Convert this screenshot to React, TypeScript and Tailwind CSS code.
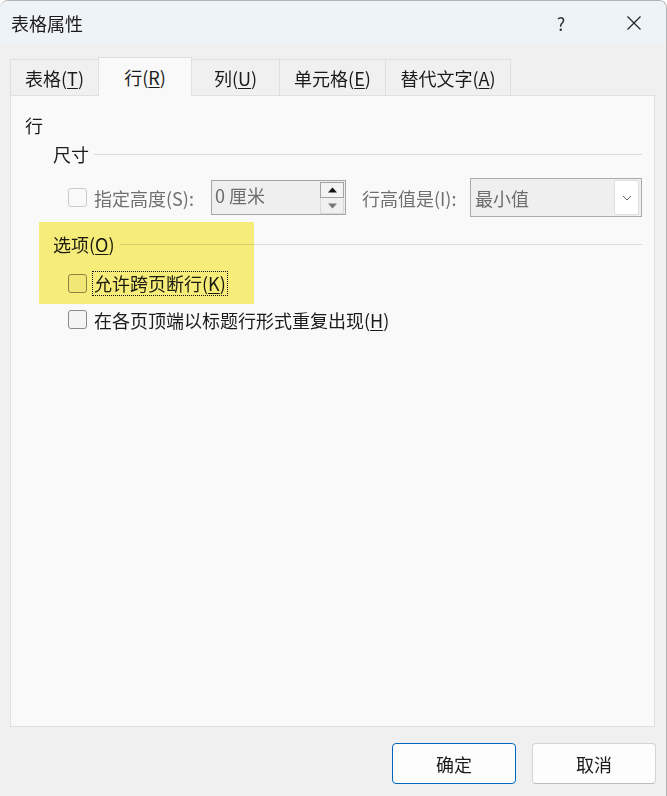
import React from "react";

const font = { fontFamily: '"Noto Sans CJK SC", "Noto Sans", sans-serif' };

function Check({ disabled = false }: { disabled?: boolean }) {
  return (
    <div
      className={
        "w-[19px] h-[19px] shrink-0 rounded-[3px] border " +
        (disabled ? "border-[#cbcbcb] bg-[#f9f9f9]" : "border-[#8a8a8a] bg-[#f4f4f4]")
      }
    />
  );
}

function Tab({ w, selected = false, children }: { w: string; selected?: boolean; children: React.ReactNode }) {
  return (
    <div
      className={
        w +
        " flex items-center justify-center border border-b-0 -ml-px first:ml-0 " +
        (selected
          ? "h-[39px] bg-[#f9f9f9] border-[#e0e0e0] relative z-10 -mb-px"
          : "h-[36px] bg-[#f0f0f0] border-[#dedede]")
      }
    >
      <span className="text-[18px] leading-[24px] text-[#1b1b1b]">{children}</span>
    </div>
  );
}

export default function App() {
  return (
    <div style={font} className="w-[667px] h-[796px] bg-[#f0f0f0] overflow-hidden rounded-t-[8px] border-t border-r border-[#b4b4b4] text-[#1b1b1b]">
      {/* Title bar */}
      <div className="h-[43px] bg-[#eef3f8] flex items-center">
        <div className="pl-[11px] text-[18px] leading-[24px] flex-1">表格属性</div>
        <div className="w-[30px] text-center text-[18px] leading-[24px] text-[#333] mr-[38px]">?</div>
        <div className="w-[40px] flex items-center justify-center mr-[12px]">
          <svg width="16" height="16" viewBox="0 0 16 16">
            <path d="M1.5 1.5 L14.5 14.5 M14.5 1.5 L1.5 14.5" stroke="#222" strokeWidth="1.2" fill="none" />
          </svg>
        </div>
      </div>

      <div className="pl-[10px] pt-[13px]">
        {/* Tabs */}
        <div className="flex items-end h-[38px]">
          <Tab w="w-[89px]">
            表格(<u className="underline-offset-2">T</u>)
          </Tab>
          <Tab w="w-[94px]" selected>
            行(<u className="underline-offset-2">R</u>)
          </Tab>
          <Tab w="w-[89px]">
            列(<u className="underline-offset-2">U</u>)
          </Tab>
          <Tab w="w-[107px]">
            单元格(<u className="underline-offset-2">E</u>)
          </Tab>
          <Tab w="w-[126px]">
            替代文字(<u className="underline-offset-2">A</u>)
          </Tab>
        </div>

        {/* Panel */}
        <div className="relative w-[645px] h-[632px] bg-[#f9f9f9] border border-[#e0e0e0] pt-[17px] pl-[14px] pr-[12px]">
          <div className="h-[24px] text-[18px] leading-[24px]">行</div>

          <div className="mt-[5px] h-[24px] flex items-center pl-[28px]">
            <span className="text-[18px] leading-[24px]">尺寸</span>
            <div className="flex-1 ml-[5px] border-t border-[#dcdcdc]" />
          </div>

          <div className="mt-[12px] h-[39px] flex items-center pl-[43px]">
            <Check disabled />
            <span className="ml-[7px] w-[117px] text-[18px] leading-[24px] text-[#707070]">指定高度(S):</span>
            <div className="w-[135px] h-[35px] border border-[#a6a6a6] bg-[#efefef] flex">
              <span className="flex-1 pl-[3px] pt-[2px] text-[18px] leading-[24px] text-[#6d6d6d]">0 厘米</span>
              <div className="flex flex-col pt-[1px] pr-[1px]">
                <div className="w-[24px] h-[16px] border border-[#a3a3a3] bg-[#f3f3f3] flex items-center justify-center">
                  <svg width="9" height="6" viewBox="0 0 9 6">
                    <path d="M0 5.5 L4.5 0.5 L9 5.5 Z" fill="#111" />
                  </svg>
                </div>
                <div className="w-[24px] h-[16px] border border-t-0 border-[#d8d8d8] bg-[#f0f0f0] flex items-center justify-center">
                  <svg width="9" height="6" viewBox="0 0 9 6">
                    <path d="M0 0.5 L4.5 5.5 L9 0.5 Z" fill="#777" />
                  </svg>
                </div>
              </div>
            </div>
            <span className="ml-[16px] w-[108px] text-[18px] leading-[24px] text-[#707070]">行高值是(I):</span>
            <div className="w-[172px] h-[39px] border border-[#ababab] bg-[#efefef] flex items-center">
              <span className="flex-1 pl-[4px] text-[18px] leading-[24px] text-[#6d6d6d]">最小值</span>
              <div className="w-[25px] h-[35px] mr-[2px] bg-white border border-[#dedede] rounded-[2px] flex items-center justify-center">
                <svg width="10" height="6" viewBox="0 0 10 6">
                  <path d="M1 1 L5 5 L9 1" stroke="#666" strokeWidth="1" fill="none" />
                </svg>
              </div>
            </div>
          </div>

          <div className="mt-[15px] h-[24px] flex items-center pl-[28px]">
            <span className="text-[18px] leading-[24px]">
              选项(<u className="underline-offset-2">O</u>)
            </span>
            <div className="flex-1 ml-[5px] border-t border-[#dcdcdc]" />
          </div>

          <div className="mt-[15px] h-[25px] flex items-center pl-[43px]">
            <Check />
            <span className="ml-[5px] px-[1px] h-[25px] border border-dotted border-[#111] text-[18px] leading-[23px]">
              允许跨页断行(<u className="underline-offset-2">K</u>)
            </span>
          </div>

          <div className="mt-[11px] h-[25px] flex items-center pl-[43px]">
            <Check />
            <span className="ml-[7px] text-[18px] leading-[24px]">
              在各页顶端以标题行形式重复出现(<u className="underline-offset-2">H</u>)
            </span>
          </div>

          {/* Highlighter mark */}
          <div className="absolute left-[28px] top-[126px] w-[215px] h-[82px] bg-[#fbf27c] mix-blend-multiply pointer-events-none" />
        </div>

        {/* Buttons */}
        <div className="mt-[16px] flex justify-end gap-[16px] pr-[10px]">
          <div className="w-[124px] h-[41px] rounded-[4px] border border-[#0067c0] bg-[#fdfdfd] flex items-center justify-center text-[18px] leading-[24px]">
            确定
          </div>
          <div className="w-[124px] h-[41px] rounded-[4px] border border-[#d3d3d3] border-b-[#bdbdbd] bg-[#fdfdfd] flex items-center justify-center text-[18px] leading-[24px]">
            取消
          </div>
        </div>
      </div>
    </div>
  );
}
